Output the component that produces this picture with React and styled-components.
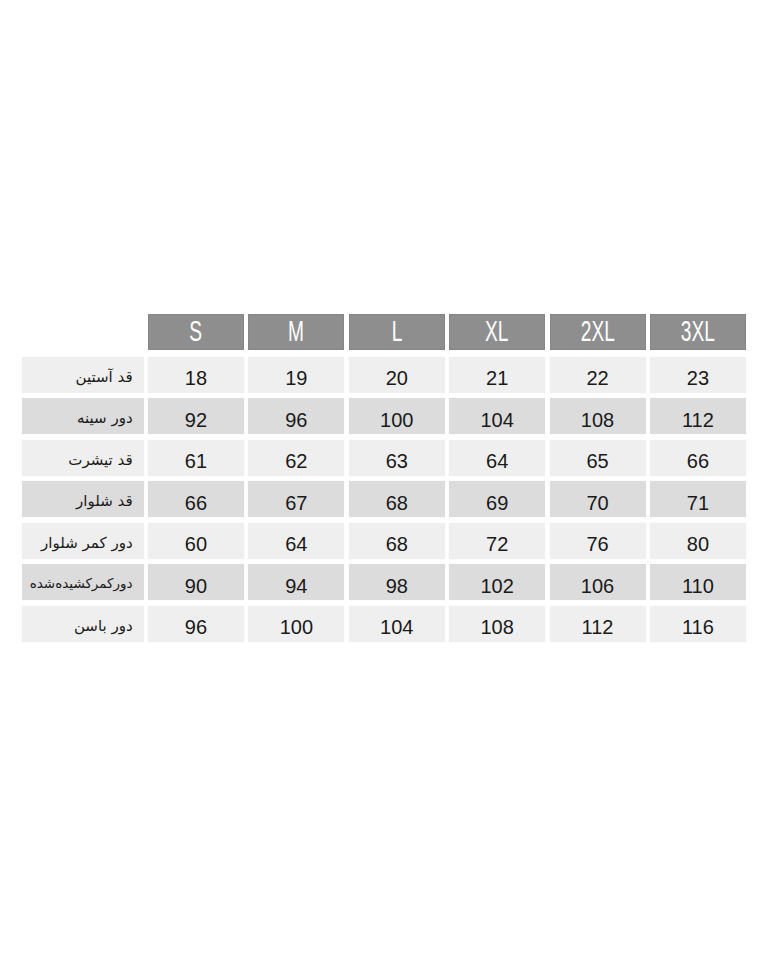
import React from "react";
import styled, { createGlobalStyle } from "styled-components";

const Global = createGlobalStyle`
  html, body { margin: 0; padding: 0; background: #ffffff; }
  body { font-family: "Liberation Sans", Arial, sans-serif; }
`;

const Page = styled.div`
  width: 768px;
  height: 960px;
  padding: 314px 0 0 22px;
  box-sizing: border-box;
`;

const Grid = styled.div`
  display: grid;
  grid-template-columns: 121.6px repeat(6, 96px);
  column-gap: 4.4px;
  row-gap: 5.5px;
  grid-auto-rows: 36px;
  grid-template-rows: 37px;
`;

const Blank = styled.div`
  margin-bottom: 1.5px;
`;

const Head = styled.div`
  background: #8e8e8e;
  border: 1px solid #858585;
  box-sizing: border-box;
  margin-bottom: 1.5px;
  display: flex;
  align-items: center;
  justify-content: center;
  color: #ffffff;
  font-family: "Liberation Sans", Arial, sans-serif;
  font-size: 29px;
  overflow: hidden;
`;

const HeadText = styled.span`
  display: inline-block;
  transform: scaleX(0.66);
  line-height: 1;
`;

const Cell = styled.div`
  background: ${(p) => (p.$dark ? "#dcdcdc" : "#efefef")};
  box-shadow: 0 0 1px rgba(0, 0, 0, 0.08);
  display: flex;
  align-items: center;
  justify-content: center;
  padding-top: 8px;
  box-sizing: border-box;
  color: #1a1a1a;
  font-size: 20px;
`;

const Label = styled(Cell)`
  justify-content: flex-start;
  align-items: flex-start;
  direction: rtl;
  padding: 11px 11px 0 0;
  font-family: "DejaVu Sans", "Noto Sans", sans-serif;
  font-size: ${(p) => (p.$tight ? "13.5px" : "15px")};
  color: #1a1a1a;
  white-space: nowrap;
  letter-spacing: ${(p) => (p.$tight ? "-0.4px" : "0")};
`;

const sizes = ["S", "M", "L", "XL", "2XL", "3XL"];

const rows = [
  { label: "قد آستین", values: [18, 19, 20, 21, 22, 23] },
  { label: "دور سینه", values: [92, 96, 100, 104, 108, 112] },
  { label: "قد تیشرت", values: [61, 62, 63, 64, 65, 66] },
  { label: "قد شلوار", values: [66, 67, 68, 69, 70, 71] },
  { label: "دور کمر شلوار", values: [60, 64, 68, 72, 76, 80] },
  { label: "دورکمرکشیده‌شده", values: [90, 94, 98, 102, 106, 110], tight: true },
  { label: "دور باسن", values: [96, 100, 104, 108, 112, 116] },
];

export default function App() {
  return (
    <>
      <Global />
      <Page>
        <Grid>
          <Blank />
          {sizes.map((s) => (
            <Head key={s}>
              <HeadText>{s}</HeadText>
            </Head>
          ))}
          {rows.map((r, i) => (
            <React.Fragment key={r.label}>
              <Label $dark={i % 2 === 1} $tight={r.tight}>
                {r.label}
              </Label>
              {r.values.map((v, j) => (
                <Cell key={j} $dark={i % 2 === 1}>
                  {v}
                </Cell>
              ))}
            </React.Fragment>
          ))}
        </Grid>
      </Page>
    </>
  );
}
